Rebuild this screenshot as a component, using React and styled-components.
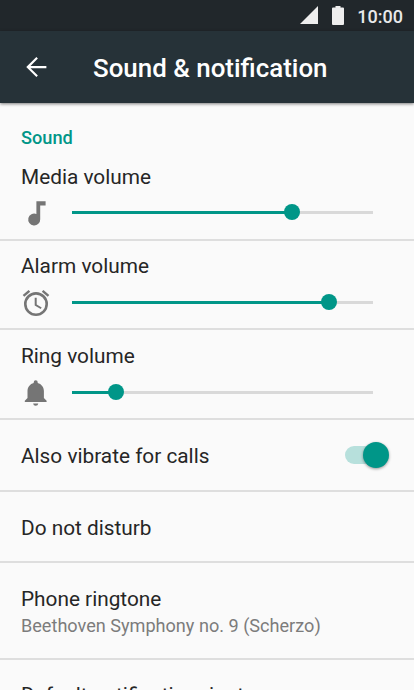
import React from 'react';
import styled, { createGlobalStyle } from 'styled-components';

const Global = createGlobalStyle`
  * { box-sizing: border-box; }
  body { margin: 0; background: #fafafa; font-family: Roboto, sans-serif; overflow: hidden; }
`;
const Screen = styled.main`
  width: 414px; height: 690px; overflow: hidden; background: #fafafa; color: #262626;
`;
const StatusBar = styled.div`
  height: 31px; background: #21272b; color: #e9e9ea; display: flex; align-items: center;
  justify-content: flex-end; padding: 1px 11px 0 0; font-size: 18px; font-weight: 500;
`;
const SignalIcon = styled.svg`width: 18px; height: 18px; margin: -2px 14px 0 0;`;
const BatteryIcon = styled.svg`width: 12px; height: 19px; margin: -2px 13px 0 0;`;
const AppBar = styled.header`
  height: 72px; background: #263238; color: #fff; display: flex; align-items: center;
  padding-left: 21px; box-shadow: 0 1px 3px rgba(0,0,0,.5);
`;
const BackIcon = styled.svg`width: 30px; height: 30px; margin-right: 42px;`;
const Title = styled.h1`margin: 2px 0 0; font-size: 25.9px; font-weight: 500; line-height: 36px;`;
const SectionTitle = styled.h2`
  margin: 0; padding: 24px 21px 0; height: 47px; font-size: 18.2px; line-height: 22px;
  font-weight: 500; color: #009688;
`;
const VolumeRow = styled.section`
  height: ${p => p.$height}px; padding: ${p => p.$top}px 21px 0; border-bottom: 2px solid #dedede;
`;
const Label = styled.div`font-size: 20.8px; line-height: 26px;`;
const RowLabel = styled(Label)`padding-top: 2px;`;
const Control = styled.div`display: flex; align-items: center; height: 46px; margin-top: ${p => p.$gap}px;`;
const VolumeIcon = styled.svg`width: 30px; height: 30px; fill: #757575; margin: 1px 21px 0 0; overflow: visible;`;
const Track = styled.div`
  width: 301px; height: 3px; display: flex; align-items: center;
  background: linear-gradient(to right, #009688 ${p => p.$value}px, #d9d9d9 ${p => p.$value}px);
`;
const Thumb = styled.div`
  width: 16px; height: 16px; border-radius: 50%; background: #009688;
  margin-left: ${p => p.$value - 8}px; flex: none;
`;
const Row = styled.section`
  height: ${p => p.$height || 72}px; padding: 0 21px; border-bottom: 2px solid #dedede;
  display: flex; align-items: center; justify-content: space-between;
`;
const RowText = styled.div`padding-top: 1px;`;
const Summary = styled.div`font-size: 18.1px; line-height: 24px; padding-top: 2px; color: #7c7c7c;`;
const Switch = styled.div`
  width: 40px; height: 18px; border-radius: 9px; background: #b7e0dc; margin-right: 8px;
  display: flex; align-items: center;
`;
const SwitchThumb = styled.div`
  width: 26px; height: 26px; flex: none; border-radius: 50%; background: #009688; margin-left: 18px;
  box-shadow: 0 1px 3px rgba(0,0,0,.4);
`;

/* Paths are drawn on a 30 x 30 grid. */
const paths = {
  note: 'M15.4 3.3v12.6A6 6 0 1 0 19.2 21.2V7.6h5.4V3.3z',
  alarm: 'M28.3 6.9l-5.9-5-1.6 1.9 5.9 5zM9.2 3.8L7.6 1.9l-5.9 5 1.6 1.9zM15.7 9.7h-2v7.7l6 3.6 1-1.6-5-3zM15 4.1a12 12 0 1 0 0 24 12 12 0 0 0 0-24zm0 21.4a9.4 9.4 0 1 1 0-18.8 9.4 9.4 0 0 1 0 18.8z',
  bell: 'M14.7 27.8a2.6 2.6 0 0 0 2.6-2.2h-5.2a2.6 2.6 0 0 0 2.6 2.2zM22.9 20v-6.900c0-4-2.600-7.200-6.200-8.100v-.8a2 2 0 0 0-4 0V5c-3.600.9-6.200 4.100-6.200 8.100V20l-2.700 2.700V24h21.800v-1.300z',
};

function Volume({ label, icon, value, height = 90, top = 13, gap = 0 }) {
  return (
    <VolumeRow $height={height} $top={top}>
      <Label>{label}</Label>
      <Control $gap={gap}>
        <VolumeIcon viewBox="0 0 30 30"><path d={paths[icon]} /></VolumeIcon>
        <Track $value={value}><Thumb $value={value} /></Track>
      </Control>
    </VolumeRow>
  );
}

export default function App() {
  return (
    <>
      <Global />
      <Screen>
        <StatusBar>
          <SignalIcon viewBox="0 0 18 18"><path fill="#eee" d="M18 0v18H0z" /></SignalIcon>
          <BatteryIcon viewBox="0 0 12 19"><path fill="#eee" d="M3.5 0h5v1.500H11q1 0 1 1V18q0 1-1 1H1q-1 0-1-1V2.500q0-1 1-1h2.500z" /></BatteryIcon>
          10:00
        </StatusBar>
        <AppBar>
          <BackIcon viewBox="0 0 24 24"><path fill="#fff" d="M20.300 11.100H7.600l5.900-5.900L12.300 4l-8.100 8 8.100 8 1.200-1.200-5.900-5.900h12.700z" /></BackIcon>
          <Title>Sound &amp; notification</Title>
        </AppBar>
        <SectionTitle>Sound</SectionTitle>
        <Volume label="Media volume" icon="note" value={220} height={91} top={14} gap={-1} />
        <Volume label="Alarm volume" icon="alarm" value={257} height={89} top={12} />
        <Volume label="Ring volume" icon="bell" value={44} />
        <Row>
          <RowLabel>Also vibrate for calls</RowLabel>
          <Switch><SwitchThumb /></Switch>
        </Row>
        <Row $height={71}><RowLabel>Do not disturb</RowLabel></Row>
        <Row $height={97}>
          <RowText>
            <RowLabel>Phone ringtone</RowLabel>
            <Summary>Beethoven Symphony no. 9 (Scherzo)</Summary>
          </RowText>
        </Row>
        <Row><Label>Default notification ringtone</Label></Row>
      </Screen>
    </>
  );
}
